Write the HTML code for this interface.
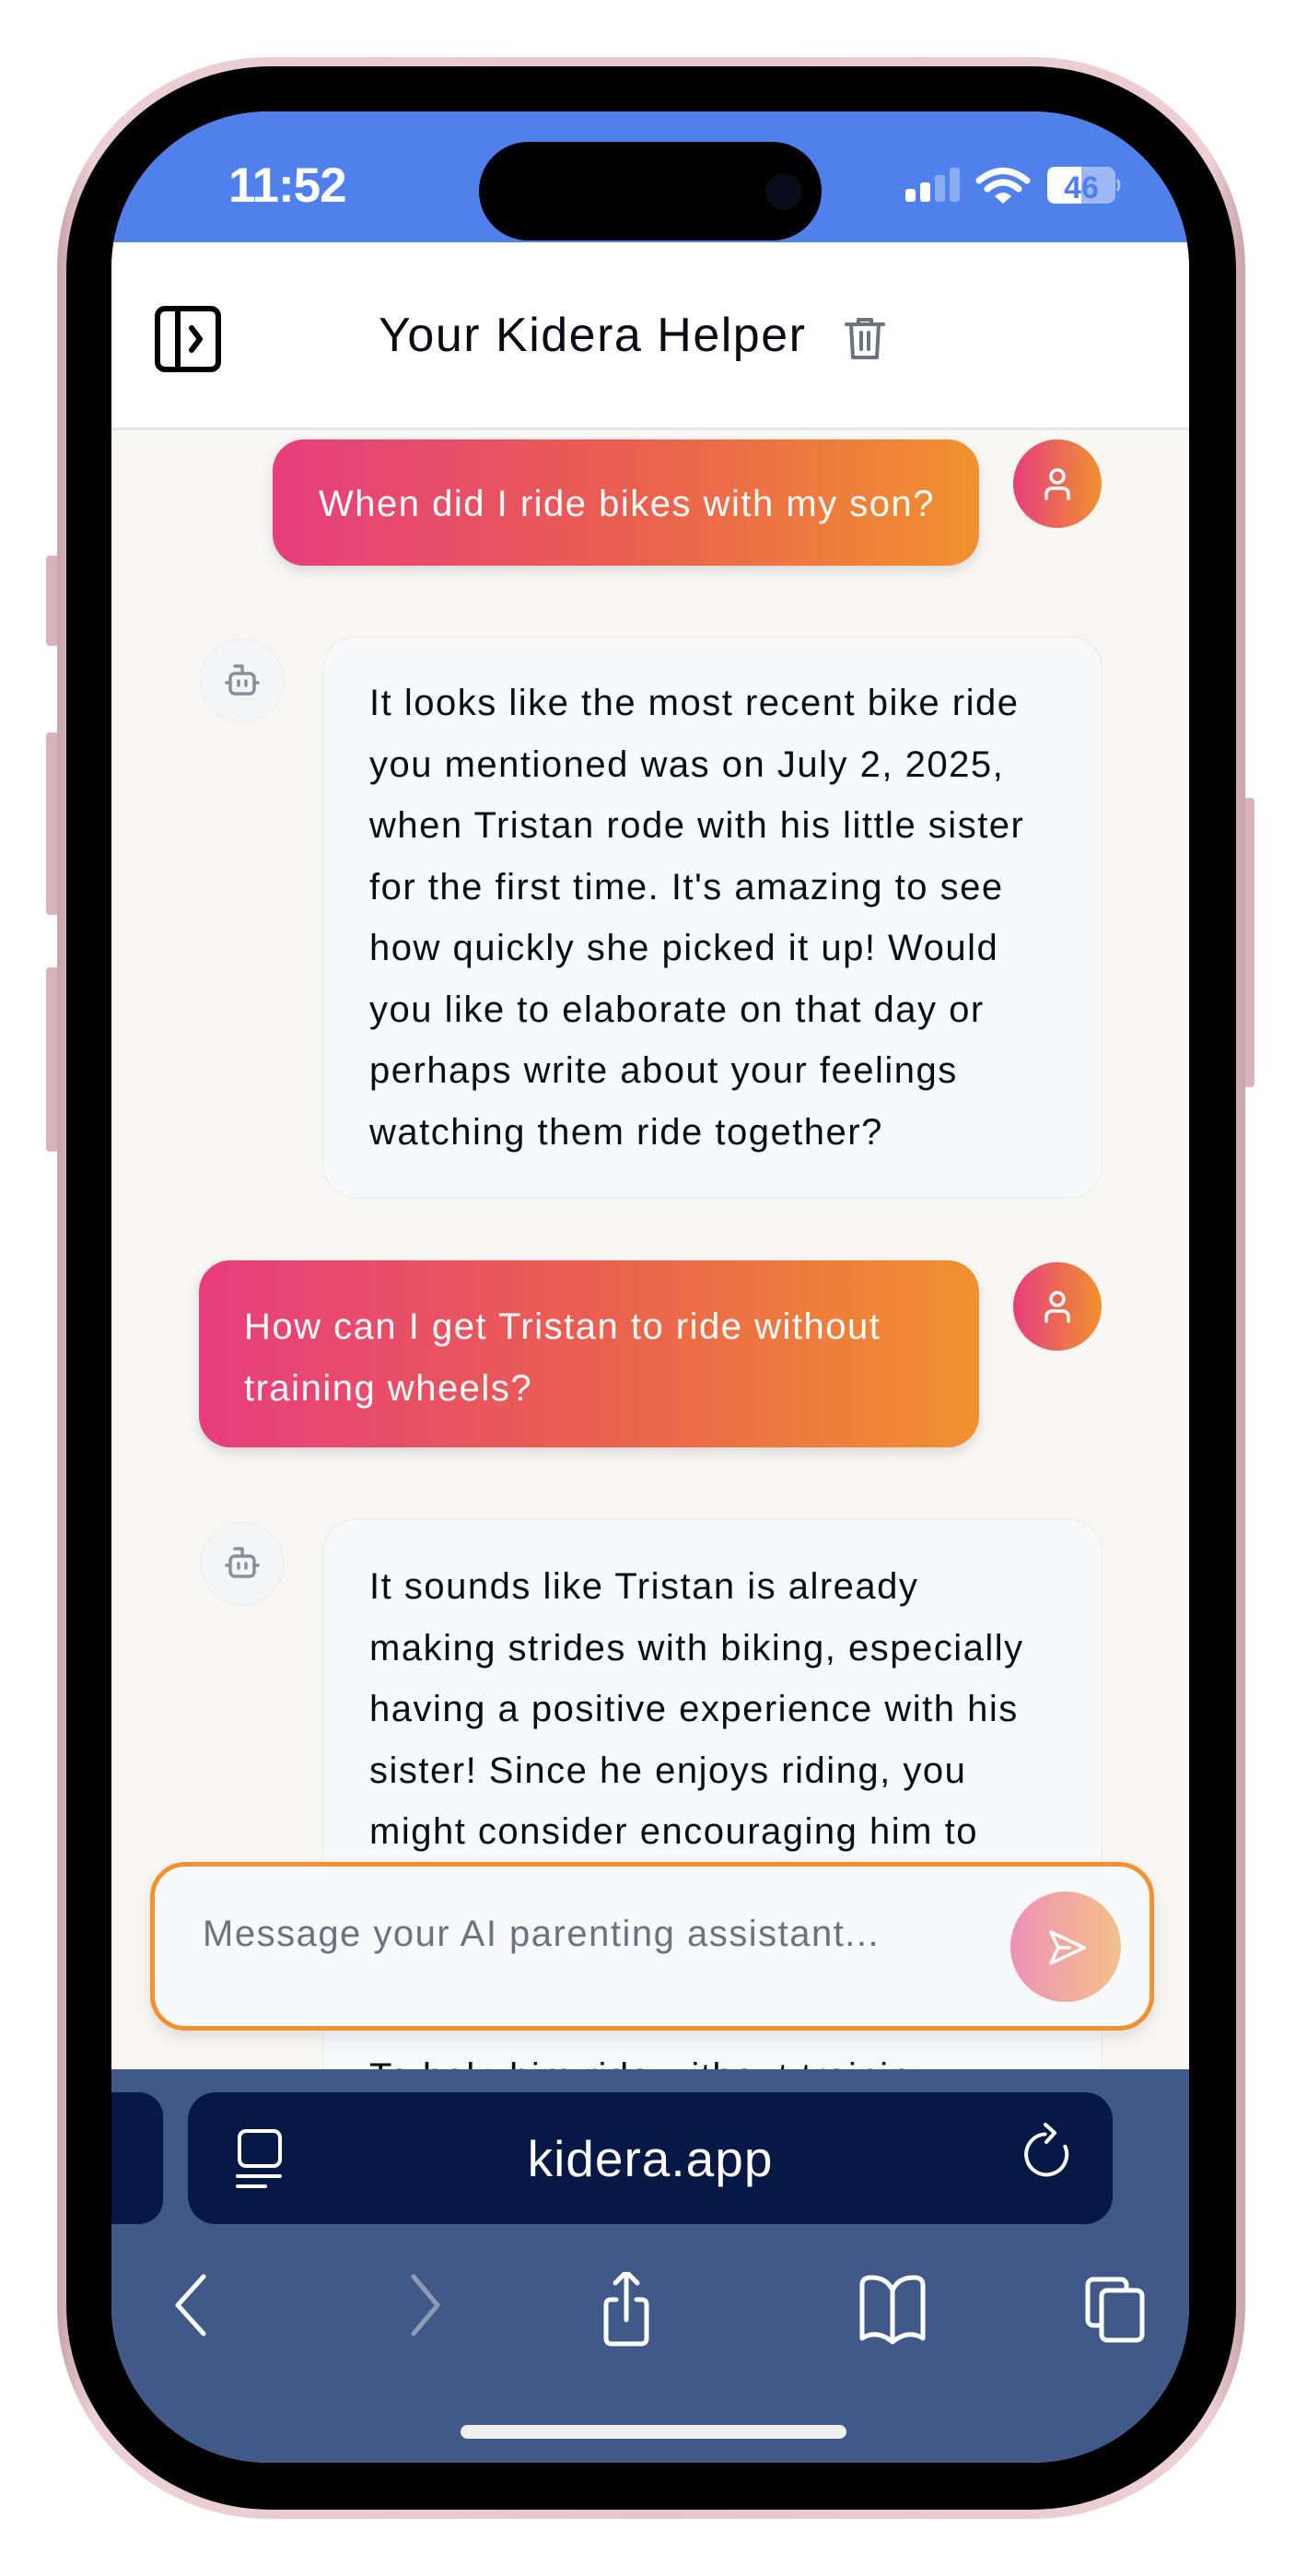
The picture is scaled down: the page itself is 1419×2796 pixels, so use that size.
<!DOCTYPE html>
<html><head><meta charset="utf-8"><style>
*{margin:0;padding:0;box-sizing:border-box}
body{width:1419px;height:2796px;background:#fff;position:relative;overflow:hidden;font-family:"Liberation Sans",sans-serif}
.abs{position:absolute}
.frame{left:62px;top:62px;width:1290px;height:2672px;border-radius:230px;background:linear-gradient(90deg,#c9a4aa,#ecd0d4 3%,#e7c6cb 50%,#ecd0d4 97%,#c9a4aa);}
.bezel{left:72px;top:72px;width:1270px;height:2652px;border-radius:222px;background:#000}
.screen{left:121px;top:121px;width:1170px;height:2552px;border-radius:170px;overflow:hidden;background:#F8F7F4}
.btn{background:#d9b3b9;border-radius:4px}
.msg{font-size:40px;letter-spacing:1.5px;line-height:66.5px;color:#0b0b12;white-space:nowrap}
.user{background:linear-gradient(90deg,#E63E7E,#EA5F50 50%,#F0922F);color:#fff;border-radius:34px;box-shadow:0 6px 14px rgba(0,0,0,.12)}
.av{width:96px;height:96px;border-radius:50%;background:linear-gradient(90deg,#E63E7E,#F0922F)}
.bot{width:92px;height:92px;border-radius:50%;background:#F4F5F7;border:2px solid #eef0f3}
.bb{background:#F8F9FB;border:2px solid #f0f1f4;border-radius:36px}
</style></head><body>
<div class="abs btn" style="left:50px;top:603px;width:14px;height:98px"></div>
<div class="abs btn" style="left:50px;top:795px;width:14px;height:198px"></div>
<div class="abs btn" style="left:50px;top:1050px;width:14px;height:200px"></div>
<div class="abs btn" style="left:1350px;top:866px;width:12px;height:314px"></div>
<div class="abs frame"></div>
<div class="abs bezel"></div>
<div class="abs screen">
  <div class="abs" style="left:0;top:0;width:1170px;height:142px;background:#4F80EC"></div>
  <div class="abs" style="left:127px;top:50px;color:#fff;font-size:53px;font-weight:bold;letter-spacing:-1px">11:52</div>
  <div class="abs" style="left:399px;top:33px;width:372px;height:107px;border-radius:54px;background:#000"></div>
  <div class="abs" style="left:710px;top:67px;width:40px;height:40px;border-radius:50%;background:#0a0a1a"></div>
  <svg class="abs" style="left:858px;top:58px" width="240" height="50" viewBox="0 0 240 50">
    <rect x="4" y="26" width="11" height="14" rx="3" fill="#fff"/>
    <rect x="20" y="19" width="11" height="21" rx="3" fill="#fff"/>
    <rect x="36" y="11" width="11" height="29" rx="3" fill="#fff" opacity=".35"/>
    <rect x="52" y="3" width="11" height="37" rx="3" fill="#fff" opacity=".35"/>
    <path d="M84 17 Q110 -4 136 17" stroke="#fff" stroke-width="7" fill="none" stroke-linecap="round"/>
    <path d="M93 26 Q110 12 127 26" stroke="#fff" stroke-width="7" fill="none" stroke-linecap="round"/>
    <path d="M101 34 L110 42 L119 34 Q110 26 101 34Z" fill="#fff"/>
    <rect x="158" y="2" width="74" height="40" rx="9" fill="#fff" opacity=".45"/>
    <path d="M167 2 H195 V42 H167 Q158 42 158 33 V11 Q158 2 167 2Z" fill="#fff"/>
    <path d="M234 16 Q238 22 234 28" stroke="#fff" stroke-width="3" fill="none" opacity=".5"/>
    <text x="195" y="36" text-anchor="middle" font-family="Liberation Sans" font-weight="bold" font-size="34" fill="#4F80EC">46</text>
  </svg>
  <div class="abs" style="left:0;top:142px;width:1170px;height:204px;background:#fff;border-bottom:3px solid #e5e7eb"></div>
  <svg class="abs" style="left:47px;top:211px" width="72" height="72" viewBox="0 0 72 72">
    <rect x="3" y="3" width="66" height="66" rx="8" fill="none" stroke="#000" stroke-width="6"/>
    <line x1="25" y1="3" x2="25" y2="69" stroke="#000" stroke-width="6"/>
    <path d="M40 24 L49 36 L40 48" fill="none" stroke="#000" stroke-width="6" stroke-linecap="round" stroke-linejoin="round"/>
  </svg>
  <div class="abs" style="left:290px;top:213px;font-size:52px;letter-spacing:1.5px;color:#0b0b14;white-space:nowrap">Your Kidera Helper</div>
  <svg class="abs" style="left:796px;top:223px" width="44" height="48" viewBox="0 0 44 48">
    <path d="M2 8 H42 M15 8 V3 H29 V8 M7 8 L9 44 H35 L37 8 M18 17 V35 M26 17 V35" fill="none" stroke="#6b7280" stroke-width="4" stroke-linejoin="round" stroke-linecap="round"/>
  </svg>
  <div class="abs user" style="left:175px;top:356px;width:767px;height:137px"></div>
  <div class="abs msg" style="left:225px;top:358px;line-height:137px;color:#fff">When did I ride bikes with my son?</div>
  <div class="abs av" style="left:979px;top:356px"></div>
  <svg class="abs" style="left:1007px;top:384px" width="40" height="40" viewBox="0 0 40 40"><circle cx="20" cy="12" r="7" fill="none" stroke="#fff" stroke-width="3.5"/><path d="M8 36 V32 Q8 25 15 25 H25 Q32 25 32 32 V36" fill="none" stroke="#fff" stroke-width="3.5" stroke-linecap="round"/></svg>
  <div class="abs bot" style="left:96px;top:572px"></div>
  <svg class="abs" style="left:122px;top:598px" width="40" height="40" viewBox="0 0 40 40"><path d="M20 4 V11 M12 4 H20" stroke="#8a8f99" stroke-width="3.5" fill="none" stroke-linecap="round"/><rect x="7" y="12" width="26" height="22" rx="5" fill="none" stroke="#8a8f99" stroke-width="3.5"/><path d="M16 20 V25 M24 20 V25 M3 22 H7 M33 22 H37" stroke="#8a8f99" stroke-width="3.5" stroke-linecap="round"/></svg>
  <div class="abs bb" style="left:229px;top:569px;width:847px;height:611px"></div>
  <div class="abs msg" style="left:280px;top:609px">It looks like the most recent bike ride<br>you mentioned was on July 2, 2025,<br>when Tristan rode with his little sister<br>for the first time. It's amazing to see<br>how quickly she picked it up! Would<br>you like to elaborate on that day or<br>perhaps write about your feelings<br>watching them ride together?</div>
  <div class="abs user" style="left:95px;top:1247px;width:847px;height:203px"></div>
  <div class="abs msg" style="left:144px;top:1286px;color:#fff">How can I get Tristan to ride without<br>training wheels?</div>
  <div class="abs av" style="left:979px;top:1249px"></div>
  <svg class="abs" style="left:1007px;top:1277px" width="40" height="40" viewBox="0 0 40 40"><circle cx="20" cy="12" r="7" fill="none" stroke="#fff" stroke-width="3.5"/><path d="M8 36 V32 Q8 25 15 25 H25 Q32 25 32 32 V36" fill="none" stroke="#fff" stroke-width="3.5" stroke-linecap="round"/></svg>
  <div class="abs bot" style="left:96px;top:1530px"></div>
  <svg class="abs" style="left:122px;top:1556px" width="40" height="40" viewBox="0 0 40 40"><path d="M20 4 V11 M12 4 H20" stroke="#8a8f99" stroke-width="3.5" fill="none" stroke-linecap="round"/><rect x="7" y="12" width="26" height="22" rx="5" fill="none" stroke="#8a8f99" stroke-width="3.5"/><path d="M16 20 V25 M24 20 V25 M3 22 H7 M33 22 H37" stroke="#8a8f99" stroke-width="3.5" stroke-linecap="round"/></svg>
  <div class="abs bb" style="left:229px;top:1527px;width:847px;height:800px"></div>
  <div class="abs msg" style="left:280px;top:1568px">It sounds like Tristan is already<br>making strides with biking, especially<br>having a positive experience with his<br>sister! Since he enjoys riding, you<br>might consider encouraging him to<br>practice balancing by removing the<br>training wheels and lowering the seat.<br><br>To help him ride without training</div>
  <div class="abs" style="left:42px;top:1900px;width:1090px;height:183px;border:5px solid #F0922F;border-radius:38px;background:#F8F9FB;box-shadow:0 8px 18px rgba(0,0,0,.1)"></div>
  <div class="abs" style="left:99px;top:1956px;font-size:40px;letter-spacing:1.5px;color:#6b7280;white-space:nowrap">Message your AI parenting assistant...</div>
  <div class="abs" style="left:976px;top:1932px;width:120px;height:120px;border-radius:50%;background:linear-gradient(90deg,#E63E7E,#F0922F);opacity:.55"></div>
  <svg class="abs" style="left:1014px;top:1970px" width="46" height="46" viewBox="0 0 46 46"><path d="M6 6 L42 23 L6 40 L14 23 Z M14 23 H26" fill="none" stroke="#fff" stroke-width="3.5" stroke-linejoin="round" stroke-linecap="round"/></svg>
  <div class="abs" style="left:0;top:2125px;width:1170px;height:430px;background:#415988"></div>
  <div class="abs" style="left:-40px;top:2150px;width:96px;height:143px;border-radius:26px;background:#061845"></div>
  <div class="abs" style="left:83px;top:2150px;width:1004px;height:143px;border-radius:30px;background:#061845"></div>
  <svg class="abs" style="left:134px;top:2188px" width="56" height="70" viewBox="0 0 56 70"><rect x="5" y="4" width="44" height="38" rx="7" fill="none" stroke="#fff" stroke-width="4"/><path d="M3 53 H49 M3 64 H33" stroke="#fff" stroke-width="4" stroke-linecap="round"/></svg>
  <div class="abs" style="left:83px;top:2152px;width:1004px;height:140px;line-height:140px;text-align:center;color:#fff;font-size:55px;letter-spacing:1px">kidera.app</div>
  <svg class="abs" style="left:990px;top:2181px" width="60" height="76" viewBox="0 0 60 76"><path d="M34 14 A22 22 0 1 0 50 34" fill="none" stroke="#fff" stroke-width="4" stroke-linecap="round" transform="rotate(-20 30 44)"/><path d="M24 4 L34 13 L25 23" fill="none" stroke="#fff" stroke-width="4" stroke-linecap="round" stroke-linejoin="round"/></svg>
  <svg class="abs" style="left:60px;top:2345px" width="1100" height="90" viewBox="0 0 1100 90">
    <path d="M40 5 L12 36 L40 67" fill="none" stroke="#fff" stroke-width="5" stroke-linecap="round" stroke-linejoin="round"/>
    <path d="M268 5 L294 36 L268 67" fill="none" stroke="#fff" stroke-width="5" stroke-linecap="round" stroke-linejoin="round" opacity=".4"/>
    <path d="M488 30 H482 Q477 30 477 36 V72 Q477 78 483 78 H515 Q521 78 521 72 V36 Q521 30 516 30 H510 M499 52 V0 M487 12 L499 0 L511 12" fill="none" stroke="#fff" stroke-width="5" stroke-linecap="round" stroke-linejoin="round"/>
    <path d="M755 72 V14 Q755 6 765 6 Q782 6 788 20 Q794 6 811 6 Q821 6 821 14 V72 Q805 62 788 76 Q771 62 755 72Z M788 20 V76" fill="none" stroke="#fff" stroke-width="5" stroke-linejoin="round"/>
    <rect x="1000" y="8" width="42" height="50" rx="6" fill="none" stroke="#fff" stroke-width="5"/>
    <rect x="1015" y="20" width="44" height="54" rx="6" fill="#415988" stroke="#fff" stroke-width="5"/>
  </svg>
  <div class="abs" style="left:379px;top:2511px;width:419px;height:15px;border-radius:8px;background:#efefef"></div>
</div>
</body></html>
